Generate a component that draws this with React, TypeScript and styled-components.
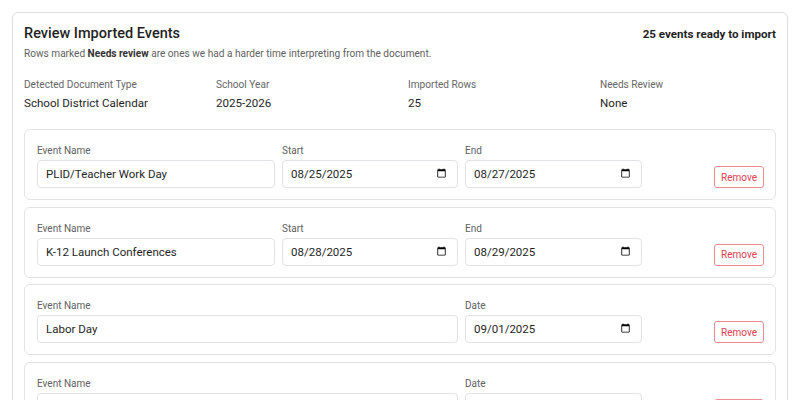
import React, { useState } from 'react';
import styled, { createGlobalStyle } from 'styled-components';

interface ImportedEvent {
    id: number;
    name: string;
    start: string;
    end?: string;
}

const initialEvents: ImportedEvent[] = [
    { id: 1, name: 'PLID/Teacher Work Day', start: '2025-08-25', end: '2025-08-27' },
    { id: 2, name: 'K-12 Launch Conferences', start: '2025-08-28', end: '2025-08-29' },
    { id: 3, name: 'Labor Day', start: '2025-09-01' },
    { id: 4, name: 'First Day of School', start: '2025-09-02' },
    { id: 5, name: 'Fall Break', start: '2025-10-16', end: '2025-10-17' },
];

const meta = [
    { label: 'Detected Document Type', value: 'School District Calendar' },
    { label: 'School Year', value: '2025-2026' },
    { label: 'Imported Rows', value: '25' },
    { label: 'Needs Review', value: 'None' },
];

export default function App() {
    const [events, setEvents] = useState<ImportedEvent[]>(initialEvents);

    function updateEvent(id: number, field: keyof ImportedEvent, value: string) {
        setEvents(prev => prev.map(ev => (ev.id === id ? { ...ev, [field]: value } : ev)));
    }

    function removeEvent(id: number) {
        setEvents(prev => prev.filter(ev => ev.id !== id));
    }

    return (
        <Page>
            <GlobalStyle />
            <Panel>
                <Header>
                    <Title>Review Imported Events</Title>
                    <ReadyCount>25 events ready to import</ReadyCount>
                </Header>
                <Subtitle>
                    Rows marked <strong>Needs review</strong> are ones we had a harder time interpreting from the document.
                </Subtitle>

                <MetaGrid>
                    {meta.map(item => (
                        <MetaItem key={item.label}>
                            <MetaLabel>{item.label}</MetaLabel>
                            <MetaValue>{item.value}</MetaValue>
                        </MetaItem>
                    ))}
                </MetaGrid>

                <EventList>
                    {events.map(ev => (
                        <EventCard key={ev.id}>
                            <Field $wide={!ev.end}>
                                <FieldLabel>Event Name</FieldLabel>
                                <TextInput
                                    value={ev.name}
                                    onChange={e => updateEvent(ev.id, 'name', e.target.value)} />
                            </Field>
                            {ev.end ? (
                                <>
                                    <Field>
                                        <FieldLabel>Start</FieldLabel>
                                        <TextInput
                                            type="date"
                                            value={ev.start}
                                            onChange={e => updateEvent(ev.id, 'start', e.target.value)} />
                                    </Field>
                                    <Field>
                                        <FieldLabel>End</FieldLabel>
                                        <TextInput
                                            type="date"
                                            value={ev.end}
                                            onChange={e => updateEvent(ev.id, 'end', e.target.value)} />
                                    </Field>
                                </>
                            ) : (
                                <Field>
                                    <FieldLabel>Date</FieldLabel>
                                    <TextInput
                                        type="date"
                                        value={ev.start}
                                        onChange={e => updateEvent(ev.id, 'start', e.target.value)} />
                                </Field>
                            )}
                            <RemoveButton onClick={() => removeEvent(ev.id)}>Remove</RemoveButton>
                        </EventCard>
                    ))}
                </EventList>
            </Panel>
        </Page>
    );
}

const GlobalStyle = createGlobalStyle`
    * {
        box-sizing: border-box;
    }

    body {
        margin: 0;
        background: #ffffff;
        font-family: Roboto, "Liberation Sans", Arial, sans-serif;
        color: #212121;
    }
`;

const Page = styled.div`
    padding: 12px;
`;

const Panel = styled.section`
    border: 1px solid #dedede;
    border-radius: 6px;
    padding: 11px 11px 12px;
    background: #ffffff;
`;

const Header = styled.div`
    display: flex;
    justify-content: space-between;
    align-items: baseline;
`;

const Title = styled.h2`
    margin: 0;
    font-size: 14.5px;
    font-weight: 500;
    line-height: 20px;
    color: #1f1f1f;
`;

const ReadyCount = styled.span`
    font-size: 11.6px;
    font-weight: 700;
    color: #1f1f1f;
`;

const Subtitle = styled.p`
    margin: 3px 0 0;
    font-size: 10.1px;
    line-height: 14px;
    color: #5f5f5f;

    strong {
        color: #333333;
        font-weight: 700;
    }
`;

const MetaGrid = styled.div`
    display: grid;
    grid-template-columns: repeat(4, minmax(0, 1fr));
    gap: 16px;
    margin-top: 17px;
`;

const MetaItem = styled.div`
    display: flex;
    flex-direction: column;
    gap: 3px;
`;

const MetaLabel = styled.span`
    font-size: 10.1px;
    line-height: 14px;
    color: #666666;
`;

const MetaValue = styled.span`
    font-size: 11.6px;
    line-height: 16px;
    color: #1f1f1f;
`;

const EventList = styled.div`
    display: flex;
    flex-direction: column;
    gap: 6.5px;
    margin-top: 18px;
`;

const EventCard = styled.div`
    display: grid;
    grid-template-columns: minmax(0, 1fr) 176px 177px 115px;
    column-gap: 7px;
    align-items: end;
    padding: 13px 11px 11px 12px;
    border: 1px solid #e3e3e3;
    border-radius: 6px;
    background: #ffffff;
`;

const Field = styled.label<{ $wide?: boolean }>`
    display: flex;
    flex-direction: column;
    gap: 2px;
    min-width: 0;
    grid-column: ${p => (p.$wide ? 'span 2' : 'auto')};
`;

const FieldLabel = styled.span`
    font-size: 10px;
    line-height: 15px;
    color: #616161;
`;

const TextInput = styled.input`
    height: 28px;
    width: 100%;
    padding: 0 8px 0 8px;
    border: 1px solid #e0e2e6;
    border-radius: 4px;
    background: #ffffff;
    font-family: Roboto, "Liberation Sans", Arial, sans-serif;
    font-size: 11.5px;
    color: #1f1f1f;
    outline: none;

    &::-webkit-datetime-edit-month-field,
    &::-webkit-datetime-edit-day-field,
    &::-webkit-datetime-edit-year-field {
        padding: 0;
    }

    &:focus {
        border-color: #9aa5b8;
    }
`;

const RemoveButton = styled.button`
    justify-self: end;
    align-self: end;
    height: 22px;
    padding: 0 6px;
    border: 1px solid #ee8a92;
    border-radius: 3px;
    background: #ffffff;
    color: #e0404f;
    font-family: Roboto, "Liberation Sans", Arial, sans-serif;
    font-size: 10px;
    cursor: pointer;

    &:hover {
        background: #fff4f5;
    }
`;
